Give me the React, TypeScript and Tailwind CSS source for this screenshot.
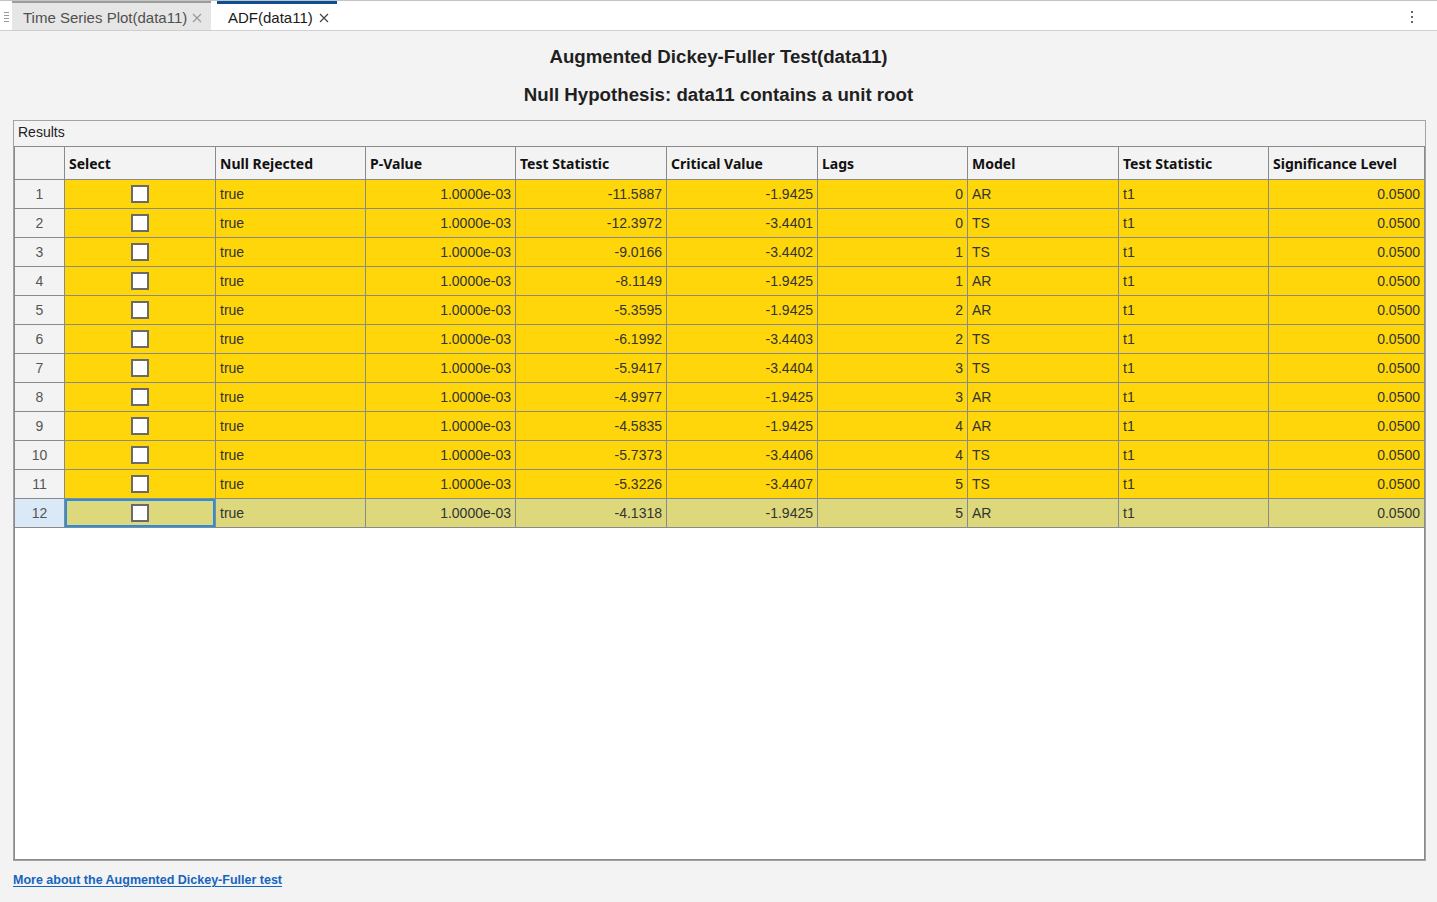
import React from "react";

type Row = {
  p: string;
  stat: string;
  crit: string;
  lags: number;
  model: string;
};

const rows: Row[] = [
  { p: "1.0000e-03", stat: "-11.5887", crit: "-1.9425", lags: 0, model: "AR" },
  { p: "1.0000e-03", stat: "-12.3972", crit: "-3.4401", lags: 0, model: "TS" },
  { p: "1.0000e-03", stat: "-9.0166", crit: "-3.4402", lags: 1, model: "TS" },
  { p: "1.0000e-03", stat: "-8.1149", crit: "-1.9425", lags: 1, model: "AR" },
  { p: "1.0000e-03", stat: "-5.3595", crit: "-1.9425", lags: 2, model: "AR" },
  { p: "1.0000e-03", stat: "-6.1992", crit: "-3.4403", lags: 2, model: "TS" },
  { p: "1.0000e-03", stat: "-5.9417", crit: "-3.4404", lags: 3, model: "TS" },
  { p: "1.0000e-03", stat: "-4.9977", crit: "-1.9425", lags: 3, model: "AR" },
  { p: "1.0000e-03", stat: "-4.5835", crit: "-1.9425", lags: 4, model: "AR" },
  { p: "1.0000e-03", stat: "-5.7373", crit: "-3.4406", lags: 4, model: "TS" },
  { p: "1.0000e-03", stat: "-5.3226", crit: "-3.4407", lags: 5, model: "TS" },
  { p: "1.0000e-03", stat: "-4.1318", crit: "-1.9425", lags: 5, model: "AR" },
];

const headers = [
  "",
  "Select",
  "Null Rejected",
  "P-Value",
  "Test Statistic",
  "Critical Value",
  "Lags",
  "Model",
  "Test Statistic",
  "Significance Level",
];

const gridCols =
  "grid grid-cols-[50px_151px_150px_150px_151px_151px_150px_151px_150px_1fr]";

function CloseIcon({ className }: { className?: string }) {
  return (
    <svg width="10" height="10" viewBox="0 0 10 10" className={className}>
      <path d="M1 1L9 9M9 1L1 9" stroke="currentColor" strokeWidth="1.2" />
    </svg>
  );
}

function TabBar() {
  return (
    <div className="flex h-[31px] items-end border-t border-b border-t-[#c4c4c4] border-b-[#cfcfcf] bg-white">
      <div className="flex h-full w-[12px] items-center justify-center pt-[3px]">
        <div className="flex flex-col gap-[2px]">
          <div className="h-px w-[5px] bg-[#9a9a9a]" />
          <div className="h-px w-[5px] bg-[#9a9a9a]" />
          <div className="h-px w-[5px] bg-[#9a9a9a]" />
          <div className="h-px w-[5px] bg-[#9a9a9a]" />
        </div>
      </div>
      <div className="flex h-[29px] w-[199px] items-center gap-[5px] border-t-[2px] border-[#9c9c9c] bg-[#e6e6e6] pl-[11px] pt-[3px] text-[15px] text-[#505050]">
        <span>Time Series Plot(data11)</span>
        <CloseIcon className="text-[#9a9a9a]" />
      </div>
      <div className="w-[6px]" />
      <div className="flex h-[29px] w-[120px] items-center gap-[6px] border-t-[3px] border-[#0e4f94] bg-white pl-[11px] pt-[2px] text-[15px] text-[#1a1a1a]">
        <span>ADF(data11)</span>
        <CloseIcon className="text-[#444]" />
      </div>
      <div className="flex-1" />
      <div className="mr-[24px] flex h-full flex-col items-center justify-center gap-[3px] pt-[2px]">
        <div className="h-[2px] w-[2px] bg-[#666]" />
        <div className="h-[2px] w-[2px] bg-[#666]" />
        <div className="h-[2px] w-[2px] bg-[#666]" />
      </div>
    </div>
  );
}

function Checkbox() {
  return <div className="h-[18px] w-[18px] border-[2px] border-[#6a6a6a] bg-white" />;
}

export default function App() {
  return (
    <div
      className="flex h-[902px] w-[1437px] flex-col overflow-hidden bg-[#f3f3f3] text-[#222]"
      style={{ fontFamily: '"Liberation Sans", Arial, sans-serif' }}
    >
      <TabBar />
      <div className="flex flex-col items-center pt-[13px]">
        <h1 className="text-[18.7px] leading-[26px] font-bold text-[#1f1f1f]">
          Augmented Dickey-Fuller Test(data11)
        </h1>
        <h2 className="mt-[12px] text-[18.7px] leading-[26px] font-bold text-[#1f1f1f]">
          Null Hypothesis: data11 contains a unit root
        </h2>
      </div>
      <div className="ml-[13px] mr-[11px] mt-[12px] flex h-[741px] flex-col border border-[#a3a3a3]">
        <div className="h-[25px] pl-[4px] pt-[1px] text-[14px] leading-[20px] text-[#222]">
          Results
        </div>
        <div className="flex flex-1 flex-col border border-[#8a8a8a] bg-white">
          <div className={`${gridCols} h-[33px] border-b border-[#8a8a8a] bg-[#f3f3f3]`}>
            {headers.map((h, i) => (
              <div
                key={i}
                className="flex items-center border-r border-[#8a8a8a] pl-[4px] pt-[1px] text-[14px] font-bold text-[#111] last:border-r-0"
                style={{ fontFamily: '"Noto Sans", "Open Sans", sans-serif' }}
              >
                {h}
              </div>
            ))}
          </div>
          {rows.map((r, idx) => {
            const selected = idx === rows.length - 1;
            const bg = selected ? "bg-[#dcd87b]" : "bg-[#ffd60a]";
            const cell = `flex h-[28px] items-center border-r border-[#8a8a8a] text-[14px] text-[#333] ${bg}`;
            const right = `${cell} justify-end pr-[4px]`;
            const left = `${cell} pl-[4px]`;
            return (
              <div key={idx} className={`${gridCols} border-b border-[#8a8a8a]`}>
                <div
                  className={`flex h-[28px] items-center justify-center border-r border-[#8a8a8a] text-[14px] text-[#555] ${
                    selected ? "bg-[#d9e9f8]" : "bg-[#f3f3f3]"
                  }`}
                >
                  {idx + 1}
                </div>
                <div
                  className={`${cell} justify-center ${
                    selected ? "shadow-[inset_0_0_0_2px_#2a8fe3]" : ""
                  }`}
                >
                  <Checkbox />
                </div>
                <div className={left}>true</div>
                <div className={right}>{r.p}</div>
                <div className={right}>{r.stat}</div>
                <div className={right}>{r.crit}</div>
                <div className={right}>{r.lags}</div>
                <div className={left}>{r.model}</div>
                <div className={left}>t1</div>
                <div className={`${right} border-r-0`}>0.0500</div>
              </div>
            );
          })}
        </div>
      </div>
      <div className="pl-[13px] pt-[9px] leading-[18px]">
        <a
          href="#"
          className="text-[12.5px] font-bold text-[#1565c0] underline underline-offset-[2px]"
        >
          More about the Augmented Dickey-Fuller test
        </a>
      </div>
    </div>
  );
}
